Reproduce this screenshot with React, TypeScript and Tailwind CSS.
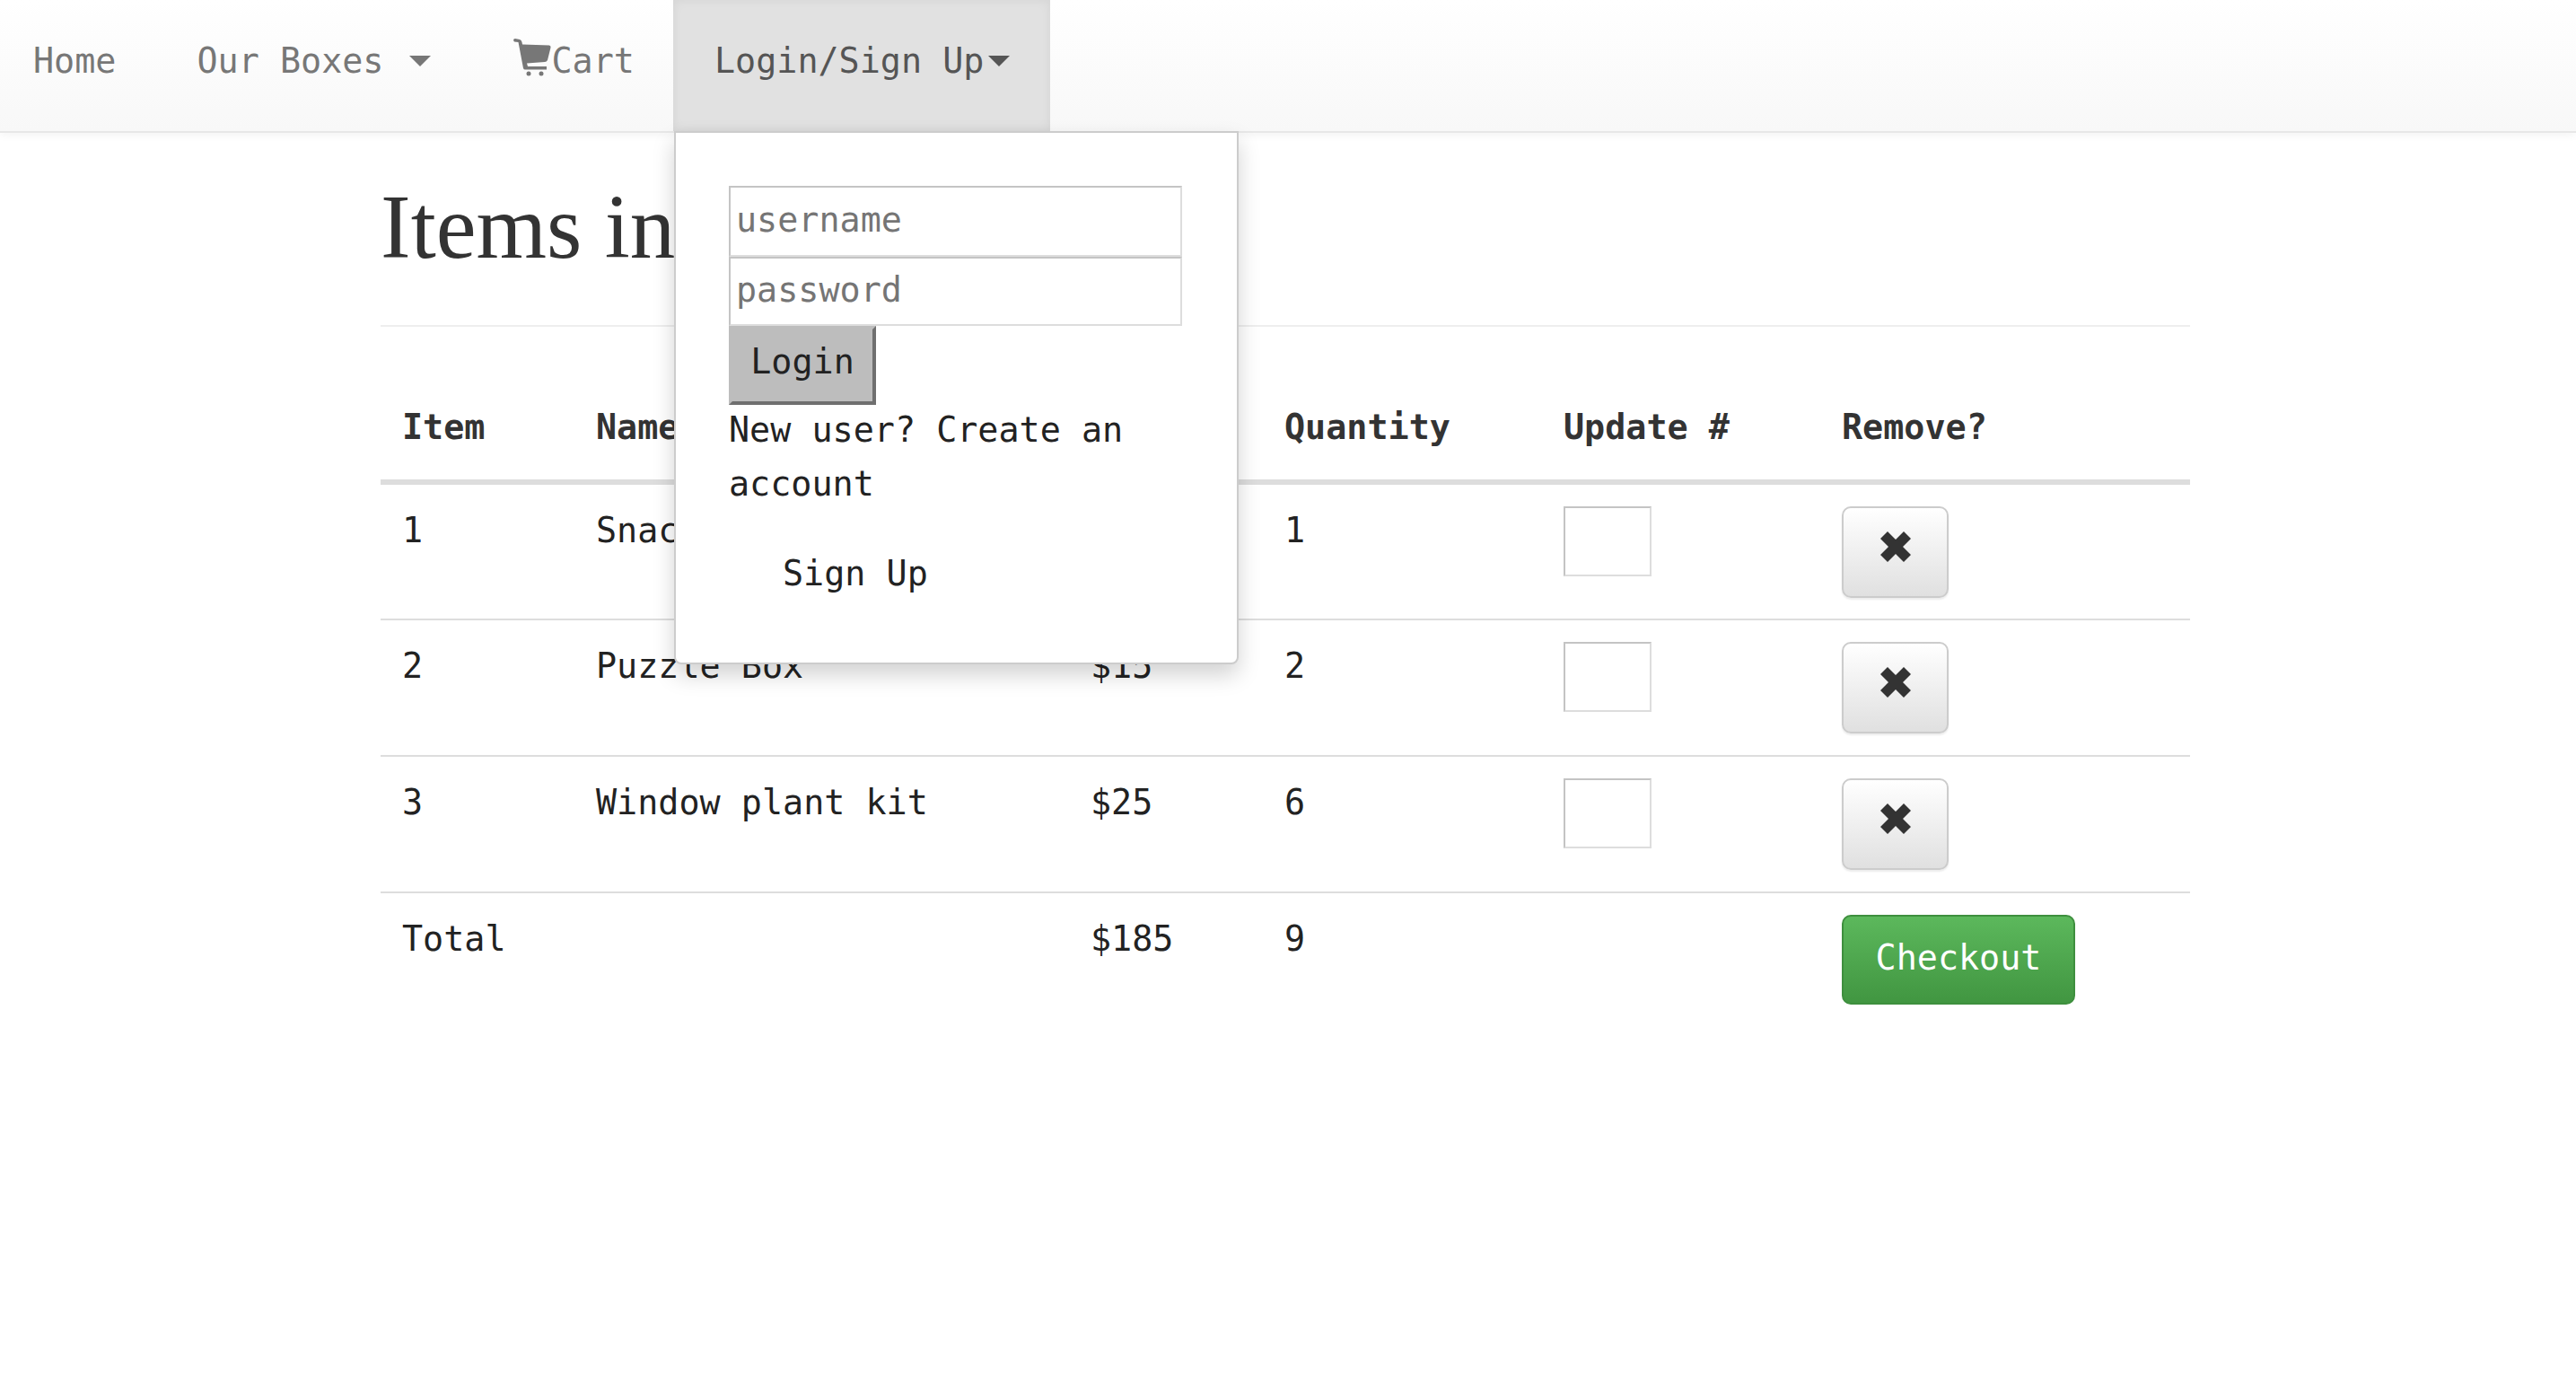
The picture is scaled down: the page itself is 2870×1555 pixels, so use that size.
const mono = "font-['DejaVu_Sans_Mono',monospace]";

const rows = [
  { id: "1", name: "Snack Box", price: "$5", qty: "1" },
  { id: "2", name: "Puzzle Box", price: "$15", qty: "2" },
  { id: "3", name: "Window plant kit", price: "$25", qty: "6" },
];

function Caret({ className }: { className: string }) {
  return <span className={`inline-block h-0 w-0 border-x-[12px] border-t-[12px] border-x-transparent ${className}`} />;
}

function CartIcon() {
  return (
    <svg viewBox="0 0 42 42" className="h-[42px] w-[42px] fill-[#777]">
      <path d="M0 2Q0 0 2 0L7 1Q9 1.500 9.500 4L10 6.500 40 7.500Q42 8 41.500 10L38 24Q37 26 35 26L15 27.500 16 31H37V34.500H13Q11.500 34.500 11 33L5.500 4 1 3.500Z" />
      <circle cx="17" cy="39" r="2.500" />
      <circle cx="31" cy="39" r="2.500" />
    </svg>
  );
}

function CrossIcon() {
  return (
    <svg viewBox="0 0 36 36" className="h-9 w-9 fill-[#333]">
      <path d="M9 1 18 10 27 1 35 9 26 18 35 27 27 35 18 26 9 35 1 27 10 18 1 9z" />
    </svg>
  );
}

function LoginMenu() {
  return (
    <div className="absolute left-[751px] top-[146px] z-10 h-[594px] w-[629px] rounded-b-[8px] border-2 border-[#ccc] bg-white pl-[59px] pt-[59px] text-[#333] shadow-[0_12px_24px_rgba(0,0,0,0.175)]">
      <input
        placeholder="username"
        className="block h-[79px] w-[505px] border-2 border-t-[#c4c4c4] border-r-[#ddd] border-b-[#ddd] border-l-[#c4c4c4] bg-white px-[6px] pb-[4px] text-[38.4px] outline-none placeholder:text-[#757575]"
      />
      <input
        placeholder="password"
        className="block h-[77px] w-[505px] border-2 border-t-[#c4c4c4] border-r-[#ddd] border-b-[#ddd] border-l-[#c4c4c4] bg-white px-[6px] pb-[4px] text-[38.4px] outline-none placeholder:text-[#757575]"
      />
      <button className="block h-[88px] w-[164px] border-[4px] border-t-[#bdbdbd] border-r-[#6f6f6f] border-b-[#6f6f6f] border-l-[#bdbdbd] bg-[#bdbdbd] pb-[8px] text-[38.4px] text-[#222]">
        Login
      </button>
      <p className="-mt-[2px] w-[505px] text-[38.4px] leading-[60px] text-[#222]">New user? Create an account</p>
      <a className="mt-[40px] block pl-[60px] text-[38.4px] leading-[60px] text-[#222]">Sign Up</a>
    </div>
  );
}

export default function App() {
  return (
    <div className={`relative min-h-[1555px] bg-white ${mono} text-[38.4px] text-[#222]`}>
      <nav className="flex h-[148px] items-stretch border-b-2 border-[#e7e7e7] bg-gradient-to-b from-white to-[#f8f8f8] text-[#777] shadow-[0_2px_10px_rgba(0,0,0,0.05)]">
        <a className="flex items-center pb-[10px] pl-[37px] pr-[45px]">Home</a>
        <a className="flex items-center pb-[10px] pl-[45px] pr-[45px]">
          Our Boxes
          <Caret className="ml-[29px] border-t-[#777]" />
        </a>
        <a className="flex items-center pb-[10px] pl-[47px] pr-[43px]">
          <span className="-mt-[8px]">
            <CartIcon />
          </span>
          Cart
        </a>
        <a className="flex h-[146px] items-center bg-[#e1e1e1] pb-[10px] pl-[46px] pr-[45px] text-[#555] shadow-[inset_0_0_12px_rgba(0,0,0,0.06)]">
          Login/Sign Up
          <Caret className="ml-[5px] border-t-[#555]" />
        </a>
      </nav>

      <LoginMenu />

      <main className="ml-[424px] w-[2016px]">
        <h1 className="mt-[38px] h-[178px] border-b-2 border-[#eee] pt-[2px] font-['Liberation_Serif',serif] text-[101px] leading-[130px] text-[#333]">
          Items in Your Cart
        </h1>
        <table className="mt-[69px] w-[2016px] table-fixed border-collapse text-left">
          <colgroup>
            <col className="w-[216px]" />
            <col className="w-[551px]" />
            <col className="w-[216px]" />
            <col className="w-[311px]" />
            <col className="w-[310px]" />
            <col className="w-[412px]" />
          </colgroup>
          <thead>
            <tr className="h-[104px] border-b-[6px] border-[#ddd] text-[#333]">
              {["Item", "Name", "Price", "Quantity", "Update #", "Remove?"].map((h) => (
                <th key={h} className="px-[24px] pb-[16px] align-middle font-bold">
                  {h}
                </th>
              ))}
            </tr>
          </thead>
          <tbody>
            {rows.map((r, i) => (
              <tr key={r.id} className={`border-b-2 border-[#ddd] align-top ${i === 0 ? "h-[153px]" : "h-[152px]"}`}>
                <td className="px-[24px] pt-[21px] leading-[60px]">{r.id}</td>
                <td className="px-[24px] pt-[21px] leading-[60px]">{r.name}</td>
                <td className="px-[24px] pt-[21px] leading-[60px]">{r.price}</td>
                <td className="px-[24px] pt-[21px] leading-[60px]">{r.qty}</td>
                <td className="px-[24px] pt-[24px]">
                  <input className="block h-[78px] w-[98px] border-2 border-t-[#c4c4c4] border-r-[#ddd] border-b-[#ddd] border-l-[#c4c4c4] bg-white outline-none" />
                </td>
                <td className="px-[24px] pt-[24px]">
                  <button className="flex h-[102px] w-[119px] justify-center rounded-[10px] border-2 border-[#ccc] bg-gradient-to-b from-white to-[#e0e0e0] pt-[25px] shadow-[0_2px_2px_rgba(0,0,0,0.08)]">
                    <CrossIcon />
                  </button>
                </td>
              </tr>
            ))}
            <tr className="align-top">
              <td className="px-[24px] pt-[21px] leading-[60px]">Total</td>
              <td />
              <td className="px-[24px] pt-[21px] leading-[60px]">$185</td>
              <td className="px-[24px] pt-[21px] leading-[60px]">9</td>
              <td />
              <td className="px-[24px] pt-[24px]">
                <button className="h-[100px] w-[260px] rounded-[10px] border-2 border-[#3e8f3e] bg-gradient-to-b from-[#5cb85c] to-[#419641] pb-[4px] text-white">
                  Checkout
                </button>
              </td>
            </tr>
          </tbody>
        </table>
      </main>
    </div>
  );
}
